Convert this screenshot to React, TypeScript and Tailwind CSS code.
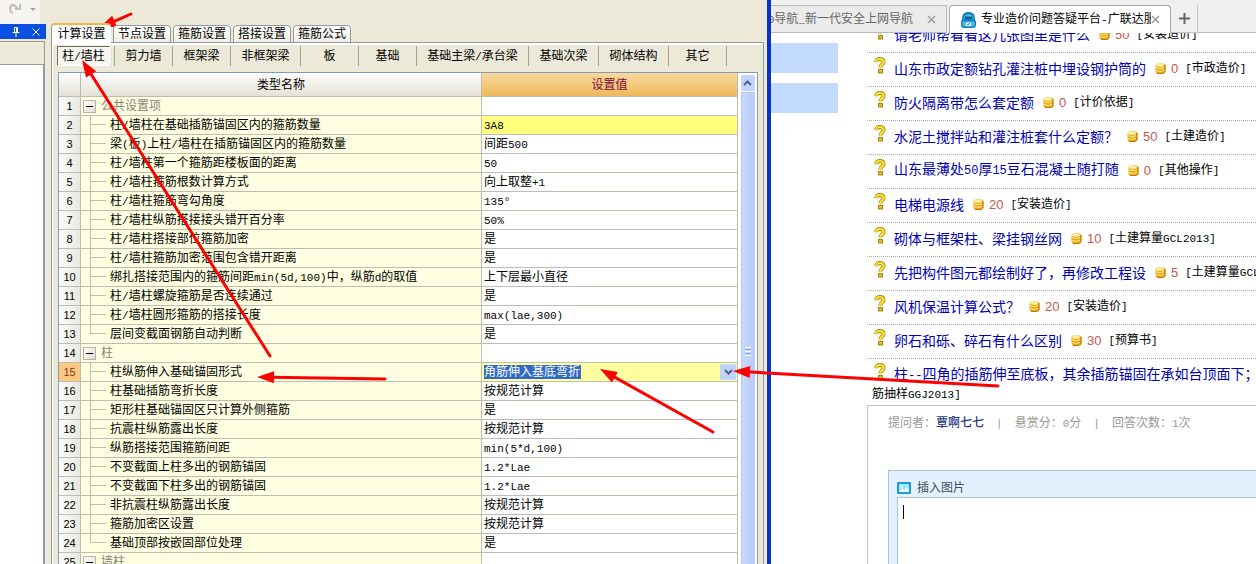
import { useState } from 'react';

type Row = { label: string; value?: string; group?: boolean; last?: boolean };

const TABS = ['计算设置', '节点设置', '箍筋设置', '搭接设置', '箍筋公式'];

const MEMBERS = [
  { name: '柱/墙柱', width: 'w-[58px]' },
  { name: '剪力墙', width: 'w-[58px]' },
  { name: '框架梁', width: 'w-[58px]' },
  { name: '非框架梁', width: 'w-[70px]' },
  { name: '板', width: 'w-[58px]' },
  { name: '基础', width: 'w-[58px]' },
  { name: '基础主梁/承台梁', width: 'w-28' },
  { name: '基础次梁', width: 'w-[70px]' },
  { name: '砌体结构', width: 'w-[70px]' },
  { name: '其它', width: 'w-[58px]' },
];

const ROWS: Row[] = [
  { label: '公共设置项', group: true },
  { label: '柱/墙柱在基础插筋锚固区内的箍筋数量', value: '3A8' },
  { label: '梁(板)上柱/墙柱在插筋锚固区内的箍筋数量', value: '间距500' },
  { label: '柱/墙柱第一个箍筋距楼板面的距离', value: '50' },
  { label: '柱/墙柱箍筋根数计算方式', value: '向上取整+1' },
  { label: '柱/墙柱箍筋弯勾角度', value: '135°' },
  { label: '柱/墙柱纵筋搭接接头错开百分率', value: '50%' },
  { label: '柱/墙柱搭接部位箍筋加密', value: '是' },
  { label: '柱/墙柱箍筋加密范围包含错开距离', value: '是' },
  { label: '绑扎搭接范围内的箍筋间距min(5d,100)中，纵筋d的取值', value: '上下层最小直径' },
  { label: '柱/墙柱螺旋箍筋是否连续通过', value: '是' },
  { label: '柱/墙柱圆形箍筋的搭接长度', value: 'max(lae,300)' },
  { label: '层间变截面钢筋自动判断', value: '是', last: true },
  { label: '柱', group: true },
  { label: '柱纵筋伸入基础锚固形式', value: '角筋伸入基底弯折' },
  { label: '柱基础插筋弯折长度', value: '按规范计算' },
  { label: '矩形柱基础锚固区只计算外侧箍筋', value: '是' },
  { label: '抗震柱纵筋露出长度', value: '按规范计算' },
  { label: '纵筋搭接范围箍筋间距', value: 'min(5*d,100)' },
  { label: '不变截面上柱多出的钢筋锚固', value: '1.2*Lae' },
  { label: '不变截面下柱多出的钢筋锚固', value: '1.2*Lae' },
  { label: '非抗震柱纵筋露出长度', value: '按规范计算' },
  { label: '箍筋加密区设置', value: '按规范计算' },
  { label: '基础顶部按嵌固部位处理', value: '是', last: true },
  { label: '墙柱', group: true },
];

const QUESTIONS = [
  { title: '请老师帮看看这几张图里是什么', points: 50, tag: '安装造价' },
  { title: '山东市政定额钻孔灌注桩中埋设钢护筒的', points: 0, tag: '市政造价' },
  { title: '防火隔离带怎么套定额', points: 0, tag: '计价依据' },
  { title: '水泥土搅拌站和灌注桩套什么定额？', points: 50, tag: '土建造价' },
  { title: '山东最薄处50厚15豆石混凝土随打随', points: 0, tag: '其他操作' },
  { title: '电梯电源线', points: 20, tag: '安装造价' },
  { title: '砌体与框架柱、梁挂钢丝网', points: 10, tag: '土建算量GCL2013' },
  { title: '先把构件图元都绘制好了，再修改工程设', points: 5, tag: '土建算量GCL2013' },
  { title: '风机保温计算公式？', points: 20, tag: '安装造价' },
  { title: '卵石和砾、碎石有什么区别', points: 30, tag: '预算书' },
];

const ARROWS = [
  { from: [131, 14], to: [99, 28] },
  { from: [270, 356], to: [82, 60] },
  { from: [385, 379], to: [257, 377] },
  { from: [713, 432], to: [600, 369] },
  { from: [998, 386], to: [733, 371] },
];

function Mixed({ text, large = false }: { text: string; large?: boolean }) {
  return (
    <span className="whitespace-pre">
      {text.split(/([ -~°]+)/).map((part, i) =>
        i % 2 ? (
          <span key={i} className={`font-['Liberation_Mono',monospace] ${large ? 'text-xs' : 'text-[11px]'}`}>
            {part}
          </span>
        ) : (
          part
        ),
      )}
    </span>
  );
}

function Arrows() {
  return (
    <svg
      className="pointer-events-none absolute inset-0 h-full w-full"
      viewBox="0 0 1256 564"
      preserveAspectRatio="none"
      aria-hidden="true"
    >
      {ARROWS.map(({ from, to }, i) => {
        const dx = from[0] - to[0];
        const dy = from[1] - to[1];
        const angle = (Math.atan2(dy, dx) * 180) / Math.PI;
        return (
          <g key={i} transform={`translate(${to[0]} ${to[1]}) rotate(${angle})`} fill="#fd0000">
            <path d={`M14 0H${Math.hypot(dx, dy)}`} stroke="#fd0000" strokeWidth="3" strokeLinecap="round" />
            <path d="M0 0L17 -6V6Z" />
          </g>
        );
      })}
    </svg>
  );
}

function QuestionIcon() {
  return (
    <svg width="12" height="17" viewBox="0 0 12 17" className="shrink-0" aria-hidden="true">
      <path
        d="M2.2 5.2C2.2 3 3.8 2 5.8 2C8 2 9.6 3.1 9.6 5.1C9.6 7.6 6.2 7.4 6.2 10.6"
        fill="none"
        stroke="#a98a10"
        strokeWidth="3.8"
      />
      <path
        d="M2.2 5C2.2 3 3.8 2 5.8 2C8 2 9.6 3.1 9.6 5.1C9.6 7.6 6.2 7.4 6.2 10.2"
        fill="none"
        stroke="#fbe22c"
        strokeWidth="2.2"
      />
      <rect x="4.5" y="12.5" width="4" height="3.5" fill="#e9b818" stroke="#a98a10" />
    </svg>
  );
}

function CoinIcon() {
  return (
    <svg width="11" height="11" viewBox="0 0 11 11" className="shrink-0" aria-hidden="true">
      <rect x="0.5" y="0.5" width="10" height="10" rx="2.5" fill="#e9a81c" />
      <ellipse cx="5" cy="2.2" rx="4" ry="1.6" fill="#fff0a0" />
      <path d="M1 4.6C3 6 7 6 9 4.6M1 7.2C3 8.6 7 8.6 9 7.2" stroke="#ffe680" strokeWidth="1.2" fill="none" />
      <path d="M10 2V9L8 10.5H2" stroke="#c07808" strokeWidth="1" fill="none" />
    </svg>
  );
}

function SidePanel() {
  return (
    <aside className="flex w-[46px] shrink-0 flex-col">
      <div className="flex h-6 w-10 items-start bg-[#f5f4ee] pt-[3px] pl-2 text-[#c2c0b6]">
        <svg width="14" height="12" viewBox="0 0 14 12" fill="none" stroke="currentColor" strokeWidth="2" aria-hidden="true">
          <path d="M5 10C1 9 1 2 5 2C8 2 8 6 11 6M12 1V6H7" />
        </svg>
        <svg width="6" height="12" viewBox="0 0 6 12" className="ml-2" aria-hidden="true">
          <path d="M0 5H6L3 8Z" fill="#a9a79c" />
        </svg>
      </div>
      <div className="flex h-[15px] items-center justify-end gap-3 bg-[#0a4fe0] pr-1.5 text-white">
        <button type="button" aria-label="固定" className="block">
          <svg width="8" height="10" viewBox="0 0 8 10" fill="none" stroke="currentColor" aria-hidden="true">
            <path d="M2.5 5.5V0.5H5.5V5.5M4.5 1V5M0.5 5.5H7.5M4 6V10" />
          </svg>
        </button>
        <button type="button" aria-label="关闭" className="block">
          <svg width="8" height="8" viewBox="0 0 8 8" stroke="currentColor" aria-hidden="true">
            <path d="M0.5 0.5L7.5 7.5M7.5 0.5L0.5 7.5" />
          </svg>
        </button>
      </div>
      <div className="mt-0.5 mr-px h-6 border-t border-r border-b border-[#9a9a92] bg-[#ece9d8]" />
      <div className="mr-px flex-1 border-r-2 border-[#8b9ba4] bg-white" />
    </aside>
  );
}

function ValueCell({ value }: { value: string }) {
  return (
    <div className="flex h-[18px] items-center">
      <select
        aria-label="柱纵筋伸入基础锚固形式"
        className="h-[14px] w-[97px] appearance-none bg-[#316ac5] text-xs leading-[14px] text-white outline-none"
      >
        <option>{value}</option>
      </select>
      <span className="mr-px ml-auto flex h-4 w-4 items-center justify-center rounded-xs bg-[#c1d2fb]">
        <svg width="9" height="6" viewBox="0 0 9 6" fill="none" stroke="#4d6185" strokeWidth="2" aria-hidden="true">
          <path d="M1 1L4.5 4.5L8 1" />
        </svg>
      </span>
    </div>
  );
}

function SettingsTable() {
  return (
    <table className="min-w-0 flex-1 table-fixed border-separate border-spacing-0 self-start">
      <colgroup>
        <col className="w-[22px]" />
        <col />
        <col className="w-64" />
      </colgroup>
      <thead>
        <tr className="h-6">
          <th className="border-r border-b border-[#bdbdb2] bg-linear-to-b from-[#fdfdfb] to-[#e4e2d7]" />
          <th className="border-r border-b border-[#bdbdb2] bg-linear-to-b from-[#fdfdfb] to-[#e4e2d7] font-normal">
            类型名称
          </th>
          <th className="border-r border-b border-[#bdbdb2] bg-linear-to-b from-[#f9d99c] to-[#efb85a] font-normal text-[#7a0a3c]">
            设置值
          </th>
        </tr>
      </thead>
      <tbody>
        {ROWS.map((row, i) => {
          const active = i === 14;
          return (
            <tr key={i}>
              <th
                className={`h-[19px] border-r border-b border-[#bdbdb2] text-center font-['Liberation_Sans',sans-serif] text-[11px] font-normal ${
                  active ? 'bg-[#fdc882] text-[#7a3a10]' : 'bg-linear-to-r from-[#fcfcfa] to-[#e9e8df]'
                }`}
              >
                {i + 1}
              </th>
              <td className="border-r border-b border-[#bdbdb2] bg-[#ffffe1]">
                {row.group ? (
                  <div className="flex h-[18px] items-center text-[#85857a]">
                    <button
                      type="button"
                      aria-label={`折叠 ${row.label}`}
                      className="mr-[5px] ml-0.5 flex h-[13px] w-[13px] items-center justify-center border border-[#b5b5a8] bg-linear-to-br from-white to-[#dedcd0]"
                    >
                      <span className="h-px w-[7px] bg-black" />
                    </button>
                    {row.label}
                  </div>
                ) : (
                  <div className="flex h-[18px] items-center">
                    <div className="mr-1 ml-[9px] w-4">
                      <div className="h-[9px] border-b border-l border-[#bdbdb2]" />
                      <div className={`h-[9px] ${row.last ? '' : 'border-l border-[#bdbdb2]'}`} />
                    </div>
                    <Mixed text={row.label} />
                  </div>
                )}
              </td>
              <td
                className={`border-r border-b border-[#bdbdb2] pl-0.5 ${
                  i === 1 ? 'bg-[#ffff80]' : active ? 'bg-[#ffff9f]' : 'bg-white'
                }`}
              >
                {active ? (
                  <ValueCell value={row.value ?? ''} />
                ) : (
                  <div className="flex h-[18px] items-center">
                    <Mixed text={row.value ?? ''} />
                  </div>
                )}
              </td>
            </tr>
          );
        })}
      </tbody>
    </table>
  );
}

function ScrollBar() {
  return (
    <div className="flex w-[19px] shrink-0 flex-col items-center bg-white pt-0.5">
      <button
        type="button"
        aria-label="向上滚动"
        className="flex h-4 w-[14px] items-center justify-center rounded-xs bg-[#c3d3fd]"
      >
        <svg width="9" height="6" viewBox="0 0 9 6" fill="none" stroke="#4d6185" strokeWidth="2" aria-hidden="true">
          <path d="M1 5L4.5 1.5L8 5" />
        </svg>
      </button>
      <div className="mt-px flex w-[14px] flex-1 flex-col items-center justify-center gap-px border-x border-t border-[#b5c7f3] bg-linear-to-r from-[#c9d8fd] to-[#b9cbf8] pt-[46px]">
        <span className="h-px w-1.5 bg-white" />
        <span className="h-px w-1.5 bg-[#8cb0f8]" />
        <span className="h-px w-1.5 bg-white" />
        <span className="h-px w-1.5 bg-[#8cb0f8]" />
        <span className="h-px w-1.5 bg-white" />
      </div>
    </div>
  );
}

function SettingsWindow() {
  const [tab, setTab] = useState(0);
  const [member, setMember] = useState(0);

  return (
    <section className="flex min-w-0 overflow-hidden border-r-4 border-[#0831c9] bg-[#ece9d8]">
      <SidePanel />
      <div className="mr-[3px] ml-[5px] flex min-w-0 flex-1 flex-col pt-[23px]">
        <div className="relative z-10 -mb-px flex h-5 items-end gap-0.5">
          {TABS.map((name, i) => (
            <button
              key={name}
              type="button"
              onClick={() => setTab(i)}
              className={
                i === tab
                  ? 'h-5 w-[60px] rounded-t-sm border-t-2 border-l border-t-[#f5b445] border-l-[#919b9c] bg-white'
                  : 'h-[18px] w-[58px] rounded-t-sm border border-[#919b9c] bg-linear-to-b from-white to-[#f0efe6]'
              }
            >
              {name}
            </button>
          ))}
        </div>
        <div className="flex min-h-0 flex-1 flex-col border-t border-r border-l border-[#919b9c]">
          <div className="flex min-h-0 flex-1 flex-col border-t-2 border-l border-white pt-px">
            <div className="flex h-5 pl-1">
              {MEMBERS.map((m, i) => (
                <div key={m.name} className={`flex shrink-0 border-r border-[#a5a294] ${m.width}`}>
                  <button
                    type="button"
                    onClick={() => setMember(i)}
                    className={
                      i === member
                        ? 'w-[53px] border-t border-r border-b border-l border-t-[#716f64] border-r-white border-b-white border-l-[#716f64] bg-[#f6f5ef]'
                        : 'w-full'
                    }
                  >
                    <Mixed text={m.name} />
                  </button>
                </div>
              ))}
            </div>
            <div className="mt-1.5 mr-[5px] ml-[5px] flex min-h-0 flex-1 overflow-hidden border-t border-r border-l border-[#7f9db9] bg-white">
              <SettingsTable />
              <ScrollBar />
            </div>
          </div>
        </div>
      </div>
    </section>
  );
}

function BrowserTabs() {
  return (
    <nav className="flex h-[33px] items-end bg-[#f0f0f0] text-xs">
      <div className="flex h-7 w-44 shrink-0 items-center justify-end gap-[14px] overflow-hidden border-t border-r border-b border-[#b9b9b9] bg-[#ebebeb] pr-2.5 text-[#666]">
        <a href="#nav" className="shrink-0">
          <Mixed text="0导航_新一代安全上网导航" />
        </a>
        <CloseTab />
      </div>
      <div className="ml-0.5 flex h-7 w-[222px] shrink-0 items-center rounded-t-sm border-t border-r border-l border-[#a9a9a9] bg-white pr-2.5 pl-[11px]">
        <svg width="15" height="16" viewBox="0 0 15 16" className="mr-[5px] shrink-0" aria-hidden="true">
          <path d="M1 8C1 2 3 0 7.5 0S14 2 14 8L15 9V13C15 15 14 16 12 16H3C1 16 0 15 0 13V9Z" fill="#1583c4" />
          <path d="M3.5 5C3.5 1.5 11.5 1.5 11.5 5V7H3.5Z" fill="#5fc0ea" />
          <path d="M4 4.5H11V7H4Z" fill="#0d5e98" />
          <path d="M1.5 9.5H13.5V13L12 14.5H3L1.5 13Z" fill="#4fb9ea" />
          <path d="M5 10.5H10V14H5Z" fill="#e6f8ff" />
          <path d="M6 13L9 11.5" stroke="#1583c4" />
        </svg>
        <a href="#qa" className="min-w-0 flex-1 overflow-hidden">
          <Mixed text="专业造价问题答疑平台-广联达服务" />
        </a>
        <CloseTab />
      </div>
      <button
        type="button"
        aria-label="新标签页"
        className="flex h-7 w-[27px] shrink-0 items-center justify-center border-r border-b border-[#c4c4c4] text-[#666]"
      >
        <svg width="11" height="11" viewBox="0 0 11 11" stroke="currentColor" strokeWidth="2" aria-hidden="true">
          <path d="M5.5 0V11M0 5.5H11" />
        </svg>
      </button>
      <div className="h-7 flex-1 border-b border-[#b9b9b9]" />
    </nav>
  );
}

function CloseTab() {
  return (
    <button type="button" aria-label="关闭标签" className="shrink-0 text-[#999]">
      <svg width="9" height="9" viewBox="0 0 9 9" stroke="currentColor" strokeWidth="1.4" aria-hidden="true">
        <path d="M1 1L8 8M8 1L1 8" />
      </svg>
    </button>
  );
}

function Answers() {
  return (
    <div className="flex flex-1 flex-col border-t border-l border-[#c4c4c4] px-5">
      <p className="mt-2 flex h-[18px] items-center gap-3 whitespace-nowrap text-[#999]">
        <span>
          提问者：<a href="#user" className="font-medium text-[#2b3a80]">覃啊七七</a>
        </span>
        <Mixed text="|" />
        <Mixed text="悬赏分：0分" />
        <Mixed text="|" />
        <Mixed text="回答次数：1次" />
      </p>
      <div className="mt-[38px] -mr-5 flex flex-1 flex-col border-t border-l border-[#a8c1dc] bg-[#e3f0fd] pl-2">
        <label htmlFor="answer" className="flex h-[26px] items-center gap-1.5 pt-2 text-[#3c5060]">
          <svg width="14" height="12" viewBox="0 0 14 12" aria-hidden="true">
            <rect width="14" height="12" rx="1" fill="#1e9bd8" />
            <rect x="2" y="2" width="10" height="8" fill="#9be6fa" />
            <path d="M2 10L5 6L7 8L10 5L12 8V10Z" fill="#e8fcff" />
            <circle cx="4.5" cy="4.5" r="1" fill="#fff" />
          </svg>
          插入图片
        </label>
        <div className="relative flex flex-1">
          <textarea
            id="answer"
            className="flex-1 resize-none border-t border-l border-[#a8c1dc] bg-white p-2 outline-none"
          />
          <span className="absolute top-2 left-1.5 h-[14px] w-px bg-black" />
        </div>
      </div>
    </div>
  );
}

function BrowserWindow() {
  return (
    <section className="flex min-w-0 flex-col overflow-hidden bg-white">
      <BrowserTabs />
      <div className="flex min-h-0 flex-1 overflow-hidden">
        <div className="flex w-24 shrink-0 flex-col gap-2.5 pt-2.5 pr-[29px]">
          <div className="h-[30px] bg-[#c2dbff]" />
          <div className="h-[30px] bg-[#c2dbff]" />
        </div>
        <main className="-mt-[14px] flex min-w-0 flex-1 flex-col">
          <ul>
            {QUESTIONS.map((q) => (
              <li key={q.title} className="flex h-[34px] items-center border-b border-dotted border-[#aaa] pb-0.5 pl-[7px] whitespace-nowrap">
                <span className="mr-2 mb-1.5">
                  <QuestionIcon />
                </span>
                <a href="#question" className="mr-[9px] text-sm leading-none text-[#0000b4]">
                  <Mixed text={q.title} large />
                </a>
                <CoinIcon />
                <span className="mr-[7px] ml-[5px] font-['Liberation_Sans',sans-serif] text-[13px] text-[#c8584e]">{q.points}</span>
                <Mixed text={`[${q.tag}]`} />
              </li>
            ))}
          </ul>
          <div className="flex h-[25px] items-end overflow-hidden pl-[7px] whitespace-nowrap">
            <span className="mr-2 self-start pt-1">
              <QuestionIcon />
            </span>
            <a href="#question" className="text-sm leading-4 text-[#0000b4]">
              <Mixed text="柱--四角的插筋伸至底板，其余插筋锚固在承如台顶面下；" large />
            </a>
          </div>
          <p className="mt-px mb-px pl-[5px] leading-[18px]">
            <Mixed text="筋抽样GGJ2013]" />
          </p>
          <Answers />
        </main>
      </div>
    </section>
  );
}

export default function App() {
  return (
    <div className="relative grid h-screen grid-cols-[771fr_485fr] overflow-hidden font-['Liberation_Sans','Noto_Sans_CJK_SC',sans-serif] text-xs text-black">
      <SettingsWindow />
      <BrowserWindow />
      <Arrows />
    </div>
  );
}
